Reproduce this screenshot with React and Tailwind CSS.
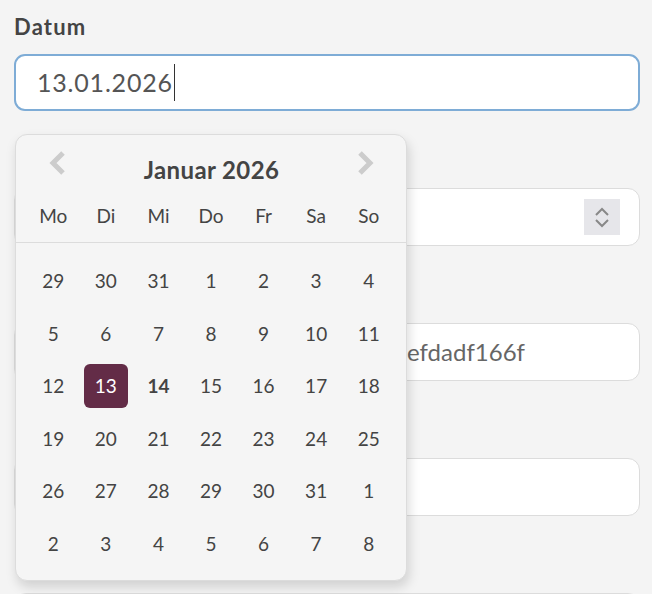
import React from "react";

const weeks = [
  [29, 30, 31, 1, 2, 3, 4],
  [5, 6, 7, 8, 9, 10, 11],
  [12, 13, 14, 15, 16, 17, 18],
  [19, 20, 21, 22, 23, 24, 25],
  [26, 27, 28, 29, 30, 31, 1],
  [2, 3, 4, 5, 6, 7, 8],
];
const dayNames = ["Mo", "Di", "Mi", "Do", "Fr", "Sa", "So"];

function Field({ label, children, focused }) {
  return (
    <div className="flex flex-col">
      <div className="h-[40px] text-[22px] font-bold leading-[26px] tracking-[1.2px] text-[#444]">{label}</div>
      <div
        className={
          focused
            ? "flex h-[57px] items-center rounded-[11px] border-2 border-[#7eacd6] bg-white pl-[21px] pr-[18px]"
            : "flex h-[58px] items-center overflow-hidden rounded-[12px] border border-[#dcdcdc] bg-white pl-[22px] pr-[19px]"
        }
      >
        {children}
      </div>
    </div>
  );
}

function Chevron({ dir }) {
  return (
    <svg width="20" height="26" viewBox="0 0 20 26" className="mb-[14px]">
      <polyline
        points={dir === "left" ? "15,3 5,13 15,23" : "5,3 15,13 5,23"}
        fill="none"
        stroke="#cccccc"
        strokeWidth="5"
        strokeLinejoin="miter"
      />
    </svg>
  );
}

export default function App() {
  return (
    <div className="relative h-[594px] w-[652px] overflow-hidden bg-[#f4f4f4] pl-[14px] pr-[12px] pt-[14px] font-['Lato','Noto_Sans',sans-serif]">
      <div className="flex flex-col gap-[37px]">
        <Field label="Datum" focused>
          <span className="text-[25px] leading-none tracking-[0.8px] text-[#555]">13.01.2026</span>
          <span className="ml-[1px] h-[37px] w-[1.5px] bg-[#333]" />
        </Field>
        <Field label="">
          <span className="flex-1" />
          <div className="flex h-[36px] w-[36px] flex-col items-center justify-center gap-[3px] bg-[#e6e6ea]">
            <svg width="16" height="9" viewBox="0 0 16 9">
              <polyline points="2,8 8,2 14,8" fill="none" stroke="#888" strokeWidth="2" />
            </svg>
            <svg width="16" height="9" viewBox="0 0 16 9">
              <polyline points="2,1 8,7 14,1" fill="none" stroke="#888" strokeWidth="2" />
            </svg>
          </div>
        </Field>
        <Field label="">
          <span className="whitespace-nowrap pl-[13px] text-[24px] leading-none text-[#666]">
            7c3e91b4a0d24f58b62c4e7a1d9efdadf166f
          </span>
        </Field>
        <Field label="">
          <span />
        </Field>
        <Field label="">
          <span />
        </Field>
      </div>

      <div className="absolute left-[15px] top-[134px] flex h-[447px] w-[392px] flex-col rounded-[12px] border border-[#dcdcdc] bg-[#f5f5f5] shadow-[2px_6px_12px_rgba(0,0,0,0.15)]">
        <div className="mt-[20px] flex h-[30px] items-center justify-between pl-[32px] pr-[31px]">
          <Chevron dir="left" />
          <span className="text-[24px] font-bold leading-[30px] tracking-[0.4px] text-[#444]">Januar 2026</span>
          <Chevron dir="right" />
        </div>
        <div className="mt-[16px] grid grid-cols-7 border-b border-[#dcdcdc] px-[11px] pb-[11px]">
          {dayNames.map((d) => (
            <div key={d} className="flex h-[30px] items-center justify-center text-[19px] text-[#444]">
              {d}
            </div>
          ))}
        </div>
        <div className="grid grid-cols-7 px-[11px] pt-[12px]">
          {weeks.flat().map((n, i) => {
            const selected = i === 15;
            const today = i === 16;
            return (
              <div key={i} className="flex h-[52.6px] items-center justify-center">
                {selected ? (
                  <span className="flex h-[44px] w-[44px] items-center justify-center rounded-[6px] bg-[#632c47] text-[19px] text-white">
                    {n}
                  </span>
                ) : (
                  <span className={today ? "text-[19px] font-bold text-[#444]" : "text-[19px] text-[#444]"}>
                    {n}
                  </span>
                )}
              </div>
            );
          })}
        </div>
      </div>
    </div>
  );
}
